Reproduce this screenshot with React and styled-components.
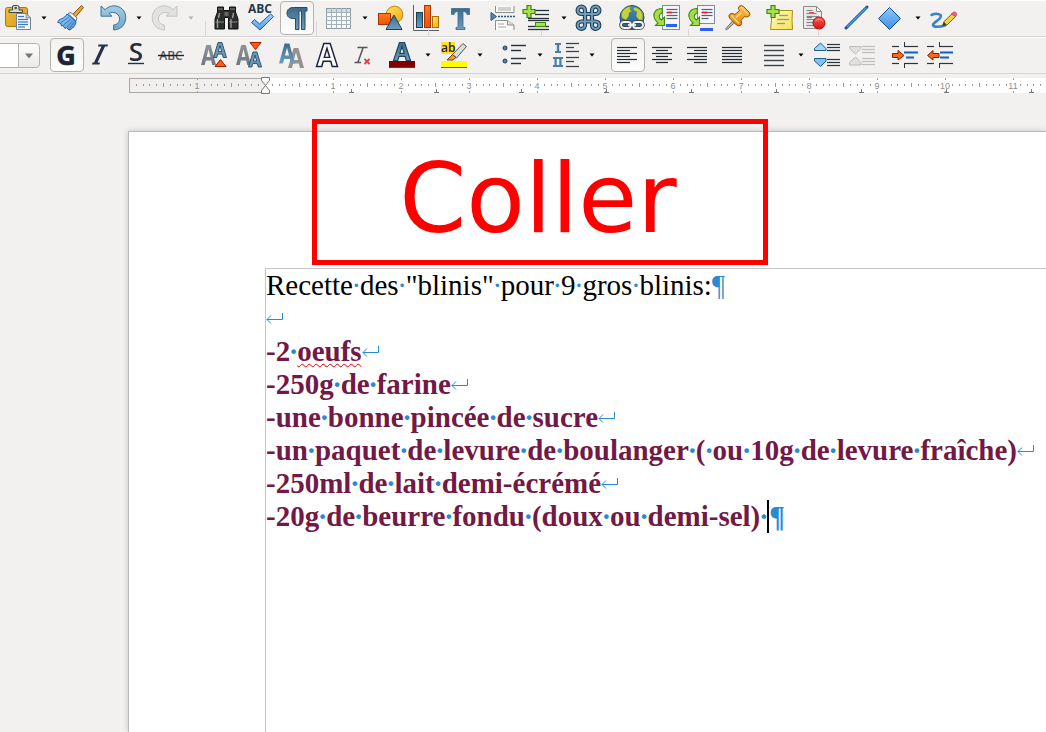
import React, { useLayoutEffect, useRef, useState } from "react";
import styled, { createGlobalStyle, css } from "styled-components";

const GlobalStyle = createGlobalStyle`
  * { box-sizing: border-box; }
  body { margin: 0; background: #f2f1f0; }
`;

const Window = styled.div`
  min-height: 100vh;
  display: flex;
  flex-direction: column;
  overflow: hidden;
  background: #f2f1f0;
  font-family: "Liberation Sans", sans-serif;
`;

const Toolbar = styled.div`
  position: relative;
  display: flex;
  align-items: flex-start;
  gap: 1px;
  height: 37px;
  padding-left: ${(p) => p.$inset || 0}px;
  border-top: 1px solid #fbfbfa;
  border-bottom: 1px solid #d6d5d3;
`;

const ToolButton = styled.button`
  flex: none;
  width: 34px;
  height: 34px;
  padding: 0 3px;
  border: 1px solid transparent;
  border-radius: 4px;
  background: transparent;
  display: flex;
  align-items: center;
  justify-content: center;
  ${(p) =>
    p.$active &&
    css`
      border-color: #b5b3b0;
      background: linear-gradient(#f3f2f1, #fdfdfd);
    `}
`;

const ArrowButton = styled.button`
  flex: none;
  width: 16px;
  height: 34px;
  padding: 0;
  border: 0;
  background: transparent;
  display: flex;
  align-items: center;
  justify-content: center;
  color: ${(p) => (p.disabled ? "#b0b0ae" : "#000")};
`;

const Gap = styled.span`
  flex: none;
  width: ${(p) => p.$w || 6}px;
`;

const SeamLines = styled.svg`
  position: absolute;
  left: 0;
  top: 19px;
  width: 100%;
  height: 18px;
  pointer-events: none;
`;

const Glyph = styled.svg`
  flex: none;
  display: block;
  width: 26px;
  height: 26px;
  overflow: visible;
`;

const Defs = styled.svg`
  position: absolute;
  width: 0;
  height: 0;
`;

const SizeCombo = styled.div`
  flex: none;
  display: flex;
  width: 40px;
  height: 25px;
  margin-top: 5px;
`;

const SizeInput = styled.input`
  width: 18px;
  height: 25px;
  padding: 0;
  border: 1px solid #b4b2ae;
  border-width: 1px 0;
  background: #fff;
`;

const SizeToggle = styled.button`
  width: 22px;
  height: 25px;
  padding: 0;
  border: 1px solid #b4b2ae;
  border-radius: 0 4px 4px 0;
  background: linear-gradient(#fcfcfc, #ecebea);
  color: #777;
  display: flex;
  align-items: center;
  justify-content: center;
`;

const RulerBar = styled.div`
  height: 20px;
  padding: 3px 0 0 129px;
`;

const RulerScale = styled.svg`
  display: block;
  width: 100%;
  height: 17px;
`;

const Desk = styled.main`
  flex: 1;
  display: flex;
  padding: 37px 0 0 128px;
`;

const Page = styled.article`
  position: relative;
  flex: 1;
  min-width: 0;
  display: flex;
  padding: 136px 0 0 136px;
  background: #fff;
  border: 1px solid #b9b9b8;
  border-width: 1px 0 0 1px;
  box-shadow: 0 0 6px rgba(0, 0, 0, 0.18);
`;

const TextFrame = styled.div`
  flex: 1;
  min-width: 0;
  border: 1px solid #c6c6c6;
  border-width: 1px 0 0 1px;
  font-family: "Liberation Serif", serif;
  font-size: 29px;
  line-height: 33px;
  white-space: pre;
  color: #000;
`;

const Line = styled.p`
  margin: 0;
  height: 33px;
  ${(p) =>
    p.$strong &&
    css`
      font-weight: bold;
      color: #721946;
    `}
`;

const Mark = styled.span`
  color: #268bd2;
`;

const Space = styled.span`
  position: relative;
  display: inline-block;
  width: 7px;
`;

const SpaceDot = styled(Mark)`
  position: absolute;
  inset: 0 -4px;
  text-align: center;
`;

const Misspelt = styled.span`
  text-decoration: underline wavy #e00000 1px;
  text-underline-offset: 2px;
  text-decoration-skip-ink: none;
`;

const ReturnGlyph = styled.svg`
  width: 17px;
  height: 12px;
  vertical-align: 3px;
  overflow: visible;
`;

const Caret = styled.span`
  display: inline-block;
  width: 2px;
  height: 33px;
  vertical-align: top;
  background: #000;
`;

const Callout = styled.div`
  position: absolute;
  left: 183px;
  top: -13px;
  width: 456px;
  height: 146px;
  padding: 14px 4px 0 0;
  border: 5px solid #fe0000;
  display: flex;
  align-items: center;
  justify-content: center;
  font-family: "DejaVu Sans", sans-serif;
  font-size: 96px;
  line-height: 122px;
  color: #fe0000;
`;

const Gradient = ({ id, from, to, diagonal }) => (
  <linearGradient id={id} x1="0" y1="0" x2={diagonal ? "1" : "0"} y2="1">
    <stop offset="0" stopColor={from} />
    <stop offset="1" stopColor={to} />
  </linearGradient>
);

const rows = (x, w, ys, color, sw = 1.2) =>
  ys.map((y, i) => (
    <line key={y} x1={Array.isArray(x) ? x[i] : x} x2={(Array.isArray(x) ? x[i] : x) + (Array.isArray(w) ? w[i] : w)} y1={y} y2={y} stroke={color} strokeWidth={sw} />
  ));

const RETURN_ARROW = "M1 1 L5 4.6 C9 1 14 0 18 1.5 C25 4 27 11 25 17 C23.500 22 19 24.600 13.600 25 L13.600 20 C18 19.500 20 16 19.500 13 C19 8.500 13 6 9 8.400 L12 11.200 H1 Z";

const LetterA = ({ x, y, w, h, fill, stroke }) => (
  <path
    transform={`translate(${x} ${y}) scale(${w / 20} ${h / 24})`}
    d="M7 0 H13 L20 24 H15 L13.600 18.500 H6.400 L5 24 H0 Z M10 5 L7.400 14.500 H12.600 Z"
    fill={fill}
    stroke={stroke}
    strokeWidth="1.4"
    fillRule="evenodd"
  />
);

const AddMark = () => (
  <path d="M4 .5 H8 V4.500 H12 V8.500 H8 V12.500 H4 V8.500 H0 V4.500 H4 Z" fill="#a6e04b" stroke="#3d8a09" strokeWidth="1.2" />
);

const GreenHook = () => (
  <path d="M8 3.500 C2 3.500 -1 7.500 0 12 C.5 14.500 2 16.500 4 18 L1.500 20.500 H10.500 V12 L7.500 15 C4.500 13 4 9.500 8.500 7.800 Z" fill="#a6dc4c" stroke="#3f8c0c" strokeWidth="1.1" />
);

const icons = {
  paste: (
    <>
      <rect x=".5" y="2.500" width="22" height="19" rx="2" fill="url(#gold)" stroke="#a87808" />
      <path d="M4 7.500 V5 H7.500 V2 Q7.500 .5 9 .5 H12.500 Q14 .5 14 2 V5 H17.500 V7.500 Z" fill="#d8d9d4" stroke="#44463f" />
      <circle cx="10.700" cy="3" r="1.300" fill="#555" />
      <path d="M11.500 8.500 H21 L25.500 13 V24.500 H11.500 Z" fill="#f4f8fc" stroke="#6f8297" />
      <path d="M21 8.500 V13 H25.500 Z" fill="#c8d6e4" stroke="#6f8297" strokeWidth=".8" />
      {rows(13, [6, 10, 10, 10, 7], [11.500, 14.500, 17, 19.500, 22], "#3a78bd")}
    </>
  ),
  brush: (
    <>
      <path d="M24.500 .5 L26.500 2.500 L18.500 12 L15.500 9.500 Z" fill="#e9a23a" stroke="#8f5408" />
      <path d="M11 8.500 L14 7.500 L20 13 L19 16 Z" fill="#f4f4f4" stroke="#777" />
      <path d="M10 9 L19 16.500 C19 20 15 24.500 12 25 L9.500 22.500 L8 23.500 L6 20.500 L4.500 21 L3.500 18 L.8 17.500 C1 15.500 2.500 14.500 4.500 13.800 C7 13 9 11 10 9 Z" fill="url(#sky)" stroke="#1c5a9c" />
      <path d="M12 12 L4 17.500 M14 14 L6.500 20 M16 15.500 L10 22 M17.500 16.500 L12.500 23.500" stroke="#2b72bb" fill="none" strokeWidth=".9" />
    </>
  ),
  undo: <path d={RETURN_ARROW} fill="url(#undoBlue)" stroke="#3d7197" />,
  redo: <path d={RETURN_ARROW} transform="translate(26 0) scale(-1 1)" fill="#e2e2e0" stroke="#c3c3c1" />,
  find: (
    <>
      <path d="M3.500 7 V2 H9.500 V5.500 H15.500 V2 H21.500 V7 L24 14 V24 H14.500 V12.500 H10.500 V24 H1 V14 Z" fill="#2c2d2d" stroke="#111" />
      <path d="M1.500 17 H10 M15 17 H23.500 M4 4 H9 M16 4 H21" stroke="#888" strokeWidth="1.200" />
      <path d="M3.500 14 V23 M17 14 V23 M5.500 8 L4.500 13 M19.500 8 L18.500 13" stroke="#a4a4a4" strokeWidth="1.300" />
      <rect x="10.500" y="7" width="4" height="4" fill="#666" />
    </>
  ),
  spelling: (
    <>
      <text x="-1" y="8" fontSize="12" fontWeight="bold" fontFamily="Open Sans, sans-serif" fill="#24384c">ABC</text>
      <path d="M2.500 17.500 L5.500 14.500 L10.500 19 L21.500 9 L24.500 11.500 L11 25 Z" fill="url(#check)" stroke="#1c5ea9" />
    </>
  ),
  pilcrow: (
    <path d="M23 2.500 V6 H21 V24.500 H17.500 V6 H15 V24.500 H11.500 V13.500 H9.500 C5 13.500 3 11.500 3 8 C3 4.500 5.500 2.500 9.500 2.500 Z" fill="url(#steel)" stroke="#254a63" />
  ),
  table: (
    <>
      <rect x=".5" y="3.500" width="24" height="20" fill="#f7f9fb" stroke="#8b9aa6" />
      <rect x="1" y="4" width="23" height="4" fill="#d3dce3" />
      <path d="M0 7.500 H25 M0 11.500 H25 M0 15.500 H25 M0 19.500 H25 M5.500 3 V24 M10.500 3 V24 M15.500 3 V24 M20.500 3 V24" stroke="#a3b1bc" />
    </>
  ),
  shapes: (
    <>
      <circle cx="16.500" cy="9.500" r="8.300" fill="url(#sun)" stroke="#bd8105" />
      <rect x=".5" y="8.500" width="12" height="11" fill="url(#orange)" stroke="#a83400" />
      <path d="M16 10 L24 24.500 H8 Z" fill="url(#steel)" stroke="#1e4056" />
    </>
  ),
  chart: (
    <>
      <path d="M.5 0 V25.500 H26" fill="none" stroke="#56616c" />
      <rect x="3.500" y="7.500" width="6" height="15" fill="url(#steel)" stroke="#1e4056" />
      <rect x="11.500" y=".5" width="6" height="22" fill="url(#orange)" stroke="#a83400" />
      <rect x="19.500" y="11.500" width="6" height="11" fill="url(#sun)" stroke="#a87000" />
    </>
  ),
  textBox: (
    <path d="M3.500 3.500 H21.500 V9.500 H19 Q18.500 6.500 15.500 6.500 H15 V21.500 Q15 22.500 17 22.500 V24.500 H8 V22.500 Q10 22.500 10 21.500 V6.500 H9.500 Q6.500 6.500 6 9.500 H3.500 Z" fill="url(#steel)" stroke="#386a8c" strokeWidth=".8" />
  ),
  pageBreak: (
    <>
      <path d="M5.500 1 V7.500 H24 V1" fill="#fbfbfa" stroke="#8c8e8a" />
      <path d="M5.500 25 V15.500 H17.500 L24 20 V25" fill="#fbfbfa" stroke="#8c8e8a" />
      <path d="M17.500 15.500 V20 H24" fill="#ddd" stroke="#8c8e8a" />
      {rows(8, [13, 13, 6, 8], [3, 5, 19, 22], "#b5b7b4")}
      <path d="M1 7.500 L6.500 11.500 L1 15.500 Z" fill="#5487b5" stroke="#28558a" />
      <path d="M8 11.500 H25" stroke="#28558a" strokeWidth="1.500" strokeDasharray="2 1" />
    </>
  ),
  insertField: (
    <g transform="translate(-2 0)">
      {rows([12, 12, 5, 5, 5, 5], [14, 14, 21, 21, 21, 21], [5.500, 9.500, 13.500, 15.500, 21.500, 24.500], "#27313a", 1.300)}
      <rect x="12.500" y="17.500" width="10" height="4" fill="#a6e04b" stroke="#3d8a09" />
      <AddMark />
    </g>
  ),
  special: (
    <g transform="translate(-1 0)">
      {["#1d4058", "#6f9cbc"].map((color, i) => (
        <path key={color} d="M9 9 H5.500 A3.700 3.700 0 1 1 9 5.500 V19.500 A3.700 3.700 0 1 1 5.500 16.500 H19.500 A3.700 3.700 0 1 1 16 19.500 V5.500 A3.700 3.700 0 1 1 19.500 9 Z" fill="none" stroke={color} strokeWidth={i ? 2 : 4.200} />
      ))}
    </g>
  ),
  hyperlink: (
    <>
      <circle cx="13" cy="12.500" r="12" fill="url(#ocean)" stroke="#1d4b77" />
      <path d="M3 7 Q6 1.500 12 1.500 L11 4.500 L13 6 L10 8 L10 11 L7 15 L3 13 Q1.500 10 3 7 Z M15 2 Q22 3 24 10 L23.500 15 L20 15 L17 11 L18 7 L14 5 Z" fill="#c3d143" stroke="#71891d" strokeWidth=".6" />
      {["#3b3f42", "#f4f4f2"].map((color, i) => (
        <g key={color} fill="none" stroke={color} strokeWidth={i ? 1.800 : 3.600}>
          <rect x="2" y="17" width="10" height="6" rx="3" />
          <rect x="14" y="17" width="10" height="6" rx="3" />
          <path d="M9 20 H17" />
        </g>
      ))}
    </>
  ),
  footnote: (
    <>
      <rect x="8.500" y=".5" width="17" height="24" fill="#f4f6fb" stroke="#7d8ba0" />
      {rows(12.500, [11, 11, 11, 11], [4.500, 7.500, 10.500, 13.500], "#59636f")}
      <path d="M13 7.500 H18" stroke="#f01818" strokeWidth="1.600" />
      <path d="M12 20.500 H23" stroke="#2d5ff0" strokeWidth="3" />
      <GreenHook />
    </>
  ),
  endnote: (
    <>
      <rect x="8.500" y=".5" width="17" height="18" fill="#f4f6fb" stroke="#7d8ba0" />
      {rows(12.500, [11, 11, 11, 7], [4.500, 7.500, 10.500, 13.500], "#59636f")}
      <path d="M13 7.500 H18" stroke="#f01818" strokeWidth="1.600" />
      <path d="M11 24.500 H24" stroke="#2d5ff0" strokeWidth="3" />
      <GreenHook />
    </>
  ),
  bookmark: (
    <>
      <path d="M9.500 15 L11.500 17 L2.500 25 L1.500 24 Z" fill="#bbb" stroke="#555" strokeWidth=".8" />
      <path d="M15 1.500 Q17 -.5 19.500 1.500 L25 7 Q27 9.500 24.500 11.500 Q22.500 12.500 20.500 11.500 L17 15.500 Q19 18.500 16.500 20.500 Q14.500 21.500 12.500 20 L5.500 13 Q4 10.500 6 9 Q8.500 7.500 11 9.500 L15.500 5.500 Q13.500 3.500 15 1.500 Z" fill="url(#pin)" stroke="#944d06" />
      <path d="M17 2 L24 9 M7.500 10.500 L15 18.500 M17 8 L12 12.500" stroke="#ffd88a" strokeWidth="1.300" />
    </>
  ),
  comment: (
    <>
      <path d="M4.500 5.500 H25.500 Q24.500 14 25.500 24.500 H3.500 Q5 16 4.500 5.500 Z" fill="url(#note)" stroke="#a39114" />
      {rows([12, 10, 10], [9, 12, 8], [10.500, 14.500, 18.500], "#9b9a6c", 1.300)}
      <AddMark />
    </>
  ),
  track: (
    <>
      <path d="M1.500 1.500 H14.500 L19.500 6.500 V23.500 H1.500 Z" fill="#ececea" stroke="#8b8b89" />
      <path d="M14.500 1.500 V6.500 H19.500 Z" fill="#fff" stroke="#8b8b89" />
      {rows(4.500, [6, 10, 12, 10, 8, 8], [5.500, 8.500, 11.500, 14.500, 17.500, 20.500], "#83888b")}
      <path d="M7 7.500 H12 M5 12.500 H10" stroke="#f04848" />
      <circle cx="17" cy="18" r="6" fill="url(#red)" stroke="#b30c0c" />
      <path d="M13.500 16 Q17 12.500 20.500 16" stroke="#ff9a94" fill="none" />
    </>
  ),
  line: (
    <>
      <path d="M2 23 L23 2" stroke="#174f9b" strokeWidth="3" strokeLinecap="round" />
      <path d="M3 22 L22.500 2.500" stroke="#5aa0ec" strokeWidth="1.200" />
    </>
  ),
  diamond: <path d="M10.500 2.500 L21.500 13.500 L10.500 24.500 L-.5 13.500 Z" fill="url(#diamondBlue)" stroke="#174a8d" />,
  draw: (
    <>
      <path d="M.5 10 Q6 7.500 9.500 10 C12 14 2 17 2 20 C3 23 10 21.500 14 20.500" fill="none" stroke="#3583cf" strokeWidth="2.600" strokeLinecap="round" />
      <path d="M11.500 21 L13 16.500 L21.500 8.500 L24.500 11.500 L16 20 Z" fill="#f7d13d" stroke="#7c5c08" />
      <path d="M11.500 21 L13 17 L15.500 19.500 Z" fill="#3c3427" />
      <path d="M20.500 9 L22.500 7 Q25 6.500 25.500 8.500 Q26 10 24.500 11.500 Z" fill="#ef6684" stroke="#b2324f" strokeWidth=".7" />
    </>
  ),
  bold: (
    <text x="12" y="23" textAnchor="middle" fontSize="27" fontWeight="bold" fontFamily="Noto Sans, sans-serif" fill="#1e2430" stroke="#1e2430" strokeWidth=".6">G</text>
  ),
  italic: <path d="M9.500 2.500 H19 L18.500 4.500 H16 L8.500 20.500 H11 L10.500 22.500 H3 L3.500 20.500 H5 L12.500 4.500 H9 Z" fill="#223349" />,
  underline: (
    <>
      <text x="12" y="19" textAnchor="middle" fontSize="26" fontFamily="Open Sans, sans-serif" fontWeight="600" fill="#272c38">S</text>
      <path d="M4 21.500 H20" stroke="#223349" strokeWidth="1.400" />
    </>
  ),
  strike: (
    <>
      <text x="12" y="18" textAnchor="middle" fontSize="12" fontWeight="600" fontFamily="Open Sans, sans-serif" fill="#555c63">ABC</text>
      <path d="M-1 13.500 H25" stroke="#222" strokeWidth="1.400" />
    </>
  ),
  grow: (
    <>
      <LetterA x={0} y={3} w={15} h={20} fill="url(#fadeGray)" />
      <LetterA x={12.500} y={.5} w={13} h={15} fill="#6b9abb" stroke="#23465f" />
      <path d="M19.500 17.500 L25 24.500 H14 Z" fill="#ff5a0c" stroke="#a51b00" />
    </>
  ),
  shrink: (
    <>
      <LetterA x={0} y={3} w={15} h={20} fill="url(#fadeGray)" />
      <LetterA x={12.500} y={10} w={13} h={15} fill="#6b9abb" stroke="#23465f" />
      <path d="M14 .5 H25 L19.500 7.500 Z" fill="#ff5a0c" stroke="#a51b00" />
    </>
  ),
  shadow: (
    <>
      <LetterA x={10} y={6} w={16} h={20} fill="#92928f" />
      <LetterA x={1} y={1.500} w={16} h={20} fill="url(#steel)" />
    </>
  ),
  outline: <LetterA x={3.500} y={1.500} w={21} h={23} fill="#fff" stroke="#18243c" />,
  clear: (
    <>
      <path d="M9.500 5.500 H19.500 M6.500 20.500 H13 M15 6 L10 20" stroke="#555" strokeWidth="1.500" fill="none" />
      <path d="M16.500 17 L21.500 22 M21.500 17 L16.500 22" stroke="#d84258" strokeWidth="1.900" />
    </>
  ),
  fontColor: (
    <>
      <LetterA x={4.500} y={.5} w={17} h={18} fill="url(#steel)" stroke="#23465f" />
      <rect x="0" y="19" width="26" height="6" fill="#800000" />
      <rect x="0" y="25" width="26" height="1" fill="#c01010" />
    </>
  ),
  highlight: (
    <>
      <rect x="0" y="0" width="14" height="12" fill="#ffe02a" />
      <text x="0" y="10" fontSize="12" fontFamily="Open Sans, sans-serif" fontWeight="600" fill="#222">ab</text>
      <rect x="0" y="19" width="26" height="6" fill="#ffff00" />
      <rect x="0" y="25" width="26" height="1" fill="#e02010" />
      <path d="M22 1.500 L25.500 4.500 L15.500 16 L11.500 12.500 Z" fill="#d9dcdd" stroke="#555" />
      <path d="M11.500 12.500 L15 15.500 L12 18 H6 Z" fill="#f39b24" stroke="#7a4305" />
    </>
  ),
  bullets: (
    <>
      <circle cx="4" cy="6" r="2" fill="#4e86ae" stroke="#1d3c54" />
      <circle cx="4" cy="19" r="2" fill="#4e86ae" stroke="#1d3c54" />
      {rows(10, [15, 10, 15, 10], [3.500, 8.500, 16.500, 21.500], "#27313a", 1.400)}
    </>
  ),
  numbering: (
    <>
      <path d="M2 1 H8 V3 H6.200 V9 H8 V11 H2 V9 H3.800 V3 H2 Z" fill="#4a7fa4" />
      <path d="M0 15 H10 V17 H8.500 V23 H10 V25 H0 V23 H1.500 V17 H0 Z M3.700 17 V23 H6.300 V17 Z" fill="#4a7fa4" fillRule="evenodd" />
      {rows(13, [13, 8, 13, 13, 8, 13], [1.500, 5.500, 9.500, 15.500, 19.500, 24.500], "#3a444c", 1.300)}
    </>
  ),
  alignLeft: rows(2, [20, 13, 20, 13, 20, 13], [5.500, 8.500, 11.500, 14.500, 17.500, 20.500], "#232b33", 1.200),
  alignCenter: rows([2, 6, 2, 6, 2, 6], [20, 12, 20, 12, 20, 12], [5.500, 8.500, 11.500, 14.500, 17.500, 20.500], "#232b33", 1.200),
  alignRight: rows([2, 9, 2, 9, 2, 9], [20, 13, 20, 13, 20, 13], [5.500, 8.500, 11.500, 14.500, 17.500, 20.500], "#232b33", 1.200),
  justify: rows(2, 20, [5.500, 8.500, 11.500, 14.500, 17.500, 20.500], "#232b33", 1.200),
  spacing: rows(2, 20, [3.500, 8.500, 13.500, 18.500, 23.500], "#3a444c", 1.400),
  paraMore: (
    <>
      <path d="M6.500 1 L12 6.500 V8.500 H.5 V6.500 Z" fill="#a1d4f5" stroke="#1d5e91" />
      <path d="M6.500 24.500 L12 19 V16.500 H.5 V19 Z" fill="#7fc3ef" stroke="#1d5e91" />
      {rows(13, 13, [2.500, 5.500, 8.500, 17.500, 20.500, 23.500], "#2c353d", 1.200)}
    </>
  ),
  paraLess: (
    <>
      <path d="M.5 4.500 H12 V6.500 L6.500 12 L.5 6.500 Z" fill="#e0e0de" stroke="#bcbcba" />
      <path d="M.5 23 H12 V20.500 L6.500 15 L.5 20.500 Z" fill="#e0e0de" stroke="#bcbcba" />
      {rows(13, 13, [4.500, 7.500, 10.500, 16.500, 19.500, 22.500], "#bdbdbb", 1.200)}
    </>
  ),
  indent: (
    <>
      {rows(0, [7, 7], [4.500, 21.500], "#2c353d")}
      {rows(12, 14, [4.500, 21.500], "#2c353d")}
      <path d="M12.500 0 V4 M12.500 22 V26" stroke="#2c353d" />
      <path d="M12 10.500 H26 M14 15.500 H22" stroke="#1160c4" strokeWidth="2" />
      <path d="M.5 11.500 H6 V8.500 L12 13.500 L6 18 V15.500 H.5 Z" fill="#f36a1a" stroke="#8e1f03" />
    </>
  ),
  outdent: (
    <>
      {rows(0, [7, 7], [4.500, 21.500], "#2c353d")}
      {rows(12, 14, [4.500, 21.500], "#2c353d")}
      <path d="M12.500 0 V4 M12.500 22 V26" stroke="#2c353d" />
      <path d="M13 10.500 H26 M13 15.500 H22" stroke="#1160c4" strokeWidth="2" />
      <path d="M12 11.500 H6 V8.500 L.5 13.500 L6 18 V15.500 H12 Z" fill="#f36a1a" stroke="#8e1f03" />
    </>
  ),
};

const Tool = ({ icon, label, active, disabled }) => (
  <ToolButton type="button" aria-label={label} aria-pressed={active} $active={active} disabled={disabled}>
    <Glyph viewBox="0 0 26 26" aria-hidden="true">{icons[icon]}</Glyph>
  </ToolButton>
);

const Drop = ({ label, disabled }) => (
  <ArrowButton type="button" aria-label={label} disabled={disabled}>
    <svg width="6" height="4" viewBox="0 0 6 4" aria-hidden="true">
      <path d="M.5 .5 H5.500 L3 3.500 Z" fill="currentColor" />
    </svg>
  </ArrowButton>
);

const UNIT = 68;
const TAB = 85;
const ORIGIN = 136;

const Tenths = ({ from }) =>
  [1, 2, 3, 4, 5, 6, 7, 8, 9].map((t) => {
    const x = Math.round(from + (t * UNIT) / 10) + 0.5;
    return <path key={t} d={t === 5 ? `M${x} 6 V10` : `M${x} 7 V9`} stroke="#9a9a9a" />;
  });

const UnitLabel = ({ x, value }) => (
  <>
    <path d={`M${x + 0.5} 1 V3 M${x + 0.5} 14 V16`} stroke="#a0a0a0" />
    <text x={x} y="12" fontSize="9" textAnchor="middle" fill="#8f8f8f">{value}</text>
  </>
);

const Ruler = () => {
  const ref = useRef(null);
  const [width, setWidth] = useState(0);

  useLayoutEffect(() => {
    const measure = () => setWidth(ref.current.getBoundingClientRect().width);
    measure();
    window.addEventListener("resize", measure);
    return () => window.removeEventListener("resize", measure);
  }, []);

  const room = Math.max(0, width - ORIGIN);
  const units = Array.from({ length: Math.max(0, Math.floor((room - 8) / UNIT) + 1) }, (_, i) => i);
  const tabs = Array.from({ length: Math.floor(room / TAB) }, (_, i) => ORIGIN + TAB * (i + 1));

  return (
    <RulerScale ref={ref} aria-label="Règle">
      <rect x={ORIGIN} y="1" width="100%" height="15" fill="#fff" />
      <rect x=".5" y="1.500" width={ORIGIN} height="14" fill="#f0efed" stroke="#a9a8a6" />
      <Tenths from={0} />
      <Tenths from={UNIT} />
      <UnitLabel x={UNIT} value={1} />
      {units.map((n) => (
        <g key={n}>
          {n > 0 && <UnitLabel x={ORIGIN + n * UNIT} value={n} />}
          <Tenths from={ORIGIN + n * UNIT} />
        </g>
      ))}
      {tabs.map((x) => (
        <path key={x} d={`M${x - 1} 15.500 H${x + 4} M${x + 1.5} 12 V15`} stroke="#777" />
      ))}
      <path d="M132.500 .5 H140.500 V3.500 L136.500 8.500 L132.500 3.500 Z M132.500 16.500 H140.500 V13.500 L136.500 8.500 L132.500 13.500 Z" fill="#fafafa" stroke="#777" />
    </RulerScale>
  );
};

const Break = () => (
  <ReturnGlyph viewBox="0 0 17 12" aria-hidden="true">
    <path d="M16.500 0 V6.500 H1 M5 2.500 L1 6.500 L5 10.500" fill="none" stroke="#268bd2" strokeWidth="1" />
  </ReturnGlyph>
);

const DottedSpace = () => (
  <Space>
    {" "}
    <SpaceDot aria-hidden="true">·</SpaceDot>
  </Space>
);

const Dotted = ({ children }) =>
  children.split(" ").map((word, i) => (
    <React.Fragment key={i}>
      {i > 0 && <DottedSpace />}
      {word}
    </React.Fragment>
  ));

export default function App() {
  return (
    <Window>
      <GlobalStyle />
      <Defs aria-hidden="true">
        <defs>
          <Gradient id="gold" from="#f2bd3f" to="#d99a12" diagonal />
          <Gradient id="sky" from="#a5d2fa" to="#4a94de" diagonal />
          <Gradient id="undoBlue" from="#a5cde4" to="#6fa5c8" />
          <Gradient id="check" from="#a8d5ff" to="#4c9cf0" />
          <Gradient id="steel" from="#3c6a8a" to="#6f9dbd" />
          <Gradient id="sun" from="#ffe05a" to="#f9ac18" diagonal />
          <Gradient id="orange" from="#ff7a1c" to="#ee5206" />
          <Gradient id="ocean" from="#3f8ac7" to="#2a5f93" />
          <Gradient id="pin" from="#ffc24a" to="#e98310" />
          <Gradient id="note" from="#fffac0" to="#f4e25a" diagonal />
          <Gradient id="red" from="#fb5a50" to="#e01010" />
          <Gradient id="diamondBlue" from="#8cc8fa" to="#3f8fe6" />
          <Gradient id="fadeGray" from="#8f9396" to="#6d7984" />
        </defs>
      </Defs>

      <Toolbar role="toolbar" aria-label="Standard" $inset={1}>
        <Tool icon="paste" label="Coller" />
        <Drop label="Options de collage" />
        <Tool icon="brush" label="Cloner le formatage" />
        <Gap $w={7} />
        <Tool icon="undo" label="Annuler" />
        <Drop label="Historique d'annulation" />
        <Tool icon="redo" label="Rétablir" disabled />
        <Drop label="Historique de rétablissement" disabled />
        <Gap $w={9} />
        <Tool icon="find" label="Rechercher et remplacer" />
        <Tool icon="spelling" label="Orthographe" />
        <Tool icon="pilcrow" label="Marques de formatage" active />
        <Gap />
        <Tool icon="table" label="Tableau" />
        <Drop label="Taille du tableau" />
        <Tool icon="shapes" label="Image" />
        <Tool icon="chart" label="Diagramme" />
        <Tool icon="textBox" label="Zone de texte" />
        <Gap />
        <Tool icon="pageBreak" label="Saut de page" />
        <Tool icon="insertField" label="Champ" />
        <Drop label="Types de champ" />
        <Tool icon="special" label="Caractères spéciaux" />
        <Gap />
        <Tool icon="hyperlink" label="Hyperlien" />
        <Tool icon="footnote" label="Note de bas de page" />
        <Tool icon="endnote" label="Note de fin" />
        <Tool icon="bookmark" label="Repère de texte" />
        <Gap $w={7} />
        <Tool icon="comment" label="Commentaire" />
        <Tool icon="track" label="Suivi des modifications" />
        <Gap />
        <Tool icon="line" label="Ligne" />
        <Tool icon="diamond" label="Formes" />
        <Drop label="Formes de base" />
        <Tool icon="draw" label="Fonctions de dessin" />
        <SeamLines aria-hidden="true">
          <path d="M205.500 1 V17 M316.500 1 V17 M428.500 9 V17 M541.500 10 V17 M688.500 9 V17 M818.500 9 V17" stroke="#d9d8d6" />
        </SeamLines>
      </Toolbar>

      <Toolbar role="toolbar" aria-label="Formatage">
        <SizeCombo>
          <SizeInput aria-label="Taille de police" />
          <SizeToggle type="button" aria-label="Tailles de police">
            <svg width="8" height="6" viewBox="0 0 8 6" aria-hidden="true">
              <path d="M0 .5 H8 L4 5.500 Z" fill="currentColor" />
            </svg>
          </SizeToggle>
        </SizeCombo>
        <Gap $w={8} />
        <Tool icon="bold" label="Gras" active />
        <Tool icon="italic" label="Italique" />
        <Tool icon="underline" label="Souligné" />
        <Tool icon="strike" label="Barré" />
        <Gap />
        <Tool icon="grow" label="Agrandir" />
        <Tool icon="shrink" label="Rétrécir" />
        <Gap />
        <Tool icon="shadow" label="Ombre" />
        <Tool icon="outline" label="Contour" />
        <Tool icon="clear" label="Effacer le formatage" />
        <Gap $w={5} />
        <Tool icon="fontColor" label="Couleur de police" />
        <Drop label="Choix de couleur de police" />
        <Tool icon="highlight" label="Surlignage" />
        <Drop label="Choix de surlignage" />
        <Gap $w={7} />
        <Tool icon="bullets" label="Puces" />
        <Drop label="Styles de puces" />
        <Tool icon="numbering" label="Numérotation" />
        <Drop label="Styles de numérotation" />
        <Gap $w={9} />
        <Tool icon="alignLeft" label="Aligner à gauche" active />
        <Tool icon="alignCenter" label="Centrer" />
        <Tool icon="alignRight" label="Aligner à droite" />
        <Tool icon="justify" label="Justifier" />
        <Gap />
        <Tool icon="spacing" label="Interligne" />
        <Drop label="Choix d'interligne" />
        <Tool icon="paraMore" label="Augmenter l'espacement" />
        <Tool icon="paraLess" label="Réduire l'espacement" disabled />
        <Gap $w={7} />
        <Tool icon="indent" label="Augmenter le retrait" />
        <Tool icon="outdent" label="Réduire le retrait" />
      </Toolbar>

      <RulerBar>
        <Ruler />
      </RulerBar>

      <Desk>
        <Page>
          <TextFrame>
            <Line><Dotted>{'Recette des "blinis" pour 9 gros blinis:'}</Dotted><Mark>¶</Mark></Line>
            <Line><Break /></Line>
            <Line $strong>-2<DottedSpace /><Misspelt>oeufs</Misspelt><Break /></Line>
            <Line $strong><Dotted>-250g de farine</Dotted><Break /></Line>
            <Line $strong><Dotted>-une bonne pincée de sucre</Dotted><Break /></Line>
            <Line $strong><Dotted>-un paquet de levure de boulanger ( ou 10g de levure fraîche)</Dotted><Break /></Line>
            <Line $strong><Dotted>-250ml de lait demi-écrémé</Dotted><Break /></Line>
            <Line $strong><Dotted>-20g de beurre fondu (doux ou demi-sel) </Dotted><Caret /><Mark>¶</Mark></Line>
          </TextFrame>
          <Callout>Coller</Callout>
        </Page>
      </Desk>
    </Window>
  );
}
